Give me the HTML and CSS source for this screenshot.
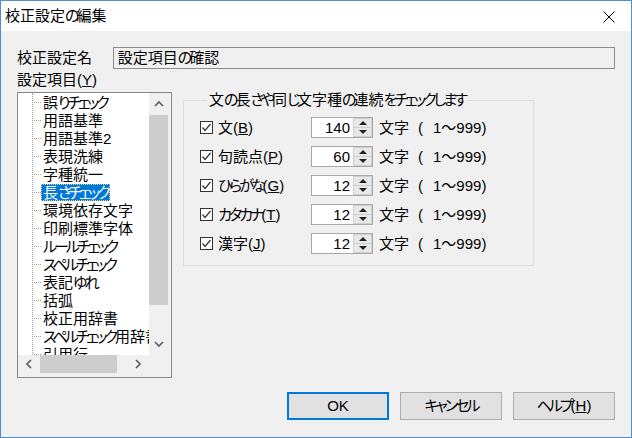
FILE: index.html
```html
<!DOCTYPE html>
<html lang="ja">
<head>
<meta charset="utf-8">
<title>校正設定の編集</title>
<link rel="stylesheet" href="styles.css">
</head>
<body>
<div class="window">
  <div class="titlebar">
    <span class="title">校正設定<span class="k">の</span>編集</span>
    <svg class="close" width="12" height="12" viewBox="0 0 12 12"><path d="M0.5 0.5 L11.5 11.5 M11.5 0.5 L0.5 11.5" stroke="#000" stroke-width="1" fill="none"/></svg>
  </div>
  <div class="client">
    <div class="name-row">
      <span class="name-label">校正設定名</span>
      <div class="name-box">設定項目<span class="k">の</span>確認</div>
    </div>
    <div class="items-label">設定項目(<u>Y</u>)</div>
    <div class="main">
      <div class="tree">
        <div class="tree-top">
          <div class="tree-items">
            <ul class="tree-list">
              <li><span class="lbl">誤<span class="k">りチェック</span></span></li>
              <li><span class="lbl">用語基準</span></li>
              <li><span class="lbl">用語基準2</span></li>
              <li><span class="lbl">表現洗練</span></li>
              <li><span class="lbl">字種統一</span></li>
              <li><span class="lbl sel">長<span class="k">さチェック</span></span></li>
              <li><span class="lbl">環境依存文字</span></li>
              <li><span class="lbl">印刷標準字体</span></li>
              <li><span class="lbl"><span class="k">ルールチェック</span></span></li>
              <li><span class="lbl"><span class="k">スペルチェック</span></span></li>
              <li><span class="lbl">表記<span class="k">ゆれ</span></span></li>
              <li><span class="lbl">括弧</span></li>
              <li><span class="lbl">校正用辞書</span></li>
              <li><span class="lbl"><span class="k">スペルチェック</span>用辞書</span></li>
              <li><span class="lbl">引用行</span></li>
            </ul>
          </div>
          <div class="vscroll">
            <div class="sbtn vbtn"><svg width="10" height="6" viewBox="0 0 10 6"><polyline points="1,5 5,1 9,5" fill="none" stroke="#606060" stroke-width="1.7"/></svg></div>
            <div class="vthumb"></div>
            <div class="vtrack"></div>
            <div class="sbtn vbtn"><svg width="10" height="6" viewBox="0 0 10 6"><polyline points="1,1 5,5 9,1" fill="none" stroke="#606060" stroke-width="1.7"/></svg></div>
          </div>
        </div>
        <div class="hscroll-row">
          <div class="hscroll">
            <div class="sbtn hbtn"><svg width="6" height="10" viewBox="0 0 6 10"><polyline points="5,1 1,5 5,9" fill="none" stroke="#606060" stroke-width="1.7"/></svg></div>
            <div class="hthumb"></div>
            <div class="htrack"></div>
            <div class="sbtn hbtn"><svg width="6" height="10" viewBox="0 0 6 10"><polyline points="1,1 5,5 1,9" fill="none" stroke="#606060" stroke-width="1.7"/></svg></div>
          </div>
          <div class="corner"></div>
        </div>
      </div>
      <fieldset class="group">
        <legend class="group-title">文<span class="k">の</span>長<span class="k">さや</span>同<span class="k">じ</span>文字種<span class="k">の</span>連続<span class="k">をチェックします</span></legend>
        <div class="rows">
          <div class="row">
            <div class="chk-label"><span class="chk"><svg width="11" height="11" viewBox="0 0 11 11"><polyline points="1.5,5.5 4,8.5 9.5,2" fill="none" stroke="#333" stroke-width="1.2"/></svg></span><span>文(<u>B</u>)</span></div>
            <div class="spin"><span class="num">140</span><span class="arrows"><span class="arr"><i class="up"></i></span><span class="arr"><i class="down"></i></span></span></div>
            <span class="unit">文字</span><span class="paren">(</span><span class="range">1～999)</span>
          </div>
          <div class="row">
            <div class="chk-label"><span class="chk"><svg width="11" height="11" viewBox="0 0 11 11"><polyline points="1.5,5.5 4,8.5 9.5,2" fill="none" stroke="#333" stroke-width="1.2"/></svg></span><span>句読点(<u>P</u>)</span></div>
            <div class="spin"><span class="num">60</span><span class="arrows"><span class="arr"><i class="up"></i></span><span class="arr"><i class="down"></i></span></span></div>
            <span class="unit">文字</span><span class="paren">(</span><span class="range">1～999)</span>
          </div>
          <div class="row">
            <div class="chk-label"><span class="chk"><svg width="11" height="11" viewBox="0 0 11 11"><polyline points="1.5,5.5 4,8.5 9.5,2" fill="none" stroke="#333" stroke-width="1.2"/></svg></span><span><span class="k">ひらがな</span>(<u>G</u>)</span></div>
            <div class="spin"><span class="num">12</span><span class="arrows"><span class="arr"><i class="up"></i></span><span class="arr"><i class="down"></i></span></span></div>
            <span class="unit">文字</span><span class="paren">(</span><span class="range">1～999)</span>
          </div>
          <div class="row">
            <div class="chk-label"><span class="chk"><svg width="11" height="11" viewBox="0 0 11 11"><polyline points="1.5,5.5 4,8.5 9.5,2" fill="none" stroke="#333" stroke-width="1.2"/></svg></span><span><span class="k">カタカナ</span>(<u>T</u>)</span></div>
            <div class="spin"><span class="num">12</span><span class="arrows"><span class="arr"><i class="up"></i></span><span class="arr"><i class="down"></i></span></span></div>
            <span class="unit">文字</span><span class="paren">(</span><span class="range">1～999)</span>
          </div>
          <div class="row">
            <div class="chk-label"><span class="chk"><svg width="11" height="11" viewBox="0 0 11 11"><polyline points="1.5,5.5 4,8.5 9.5,2" fill="none" stroke="#333" stroke-width="1.2"/></svg></span><span>漢字(<u>J</u>)</span></div>
            <div class="spin"><span class="num">12</span><span class="arrows"><span class="arr"><i class="up"></i></span><span class="arr"><i class="down"></i></span></span></div>
            <span class="unit">文字</span><span class="paren">(</span><span class="range">1～999)</span>
          </div>
        </div>
      </fieldset>
    </div>
    <div class="buttons">
      <button class="btn default">OK</button>
      <button class="btn"><span class="k">キャンセル</span></button>
      <button class="btn"><span class="k">ヘルプ</span>(<u>H</u>)</button>
    </div>
  </div>
</div>
</body>
</html>
```

FILE: styles.css
```css
* { box-sizing: border-box; }
html, body { margin: 0; padding: 0; background: #f0f0f0; }
body {
  font-family: "Liberation Sans", "Noto Sans CJK JP", sans-serif;
  font-size: 15px;
  line-height: 18px;
  color: #000;
  font-feature-settings: "palt";
}
u { text-decoration: underline; text-underline-offset: 1px; }
.k { letter-spacing: -3px; }

.window {
  width: 632px;
  height: 438px;
  border: 1px solid #4a90d9;
  display: flex;
  flex-direction: column;
  background: #f0f0f0;
}
.titlebar {
  height: 30px;
  background: #fff;
  display: flex;
  align-items: center;
  justify-content: space-between;
  padding-left: 4px;
  padding-right: 16px;
  flex: none;
}
.title { line-height: 30px; }
.close { display: block; margin-top: 1px; }

.client {
  flex: 1;
  padding: 16px 16px 0 16px;
  display: flex;
  flex-direction: column;
}
.name-row {
  display: flex;
  align-items: center;
  height: 22px;
}
.name-label { width: 96px; }
.name-box {
  width: 504px;
  height: 22px;
  border: 1px solid #8c8c8c;
  background: #f0f0f0;
  padding-left: 4px;
  line-height: 20px;
}
.items-label { margin-top: 2px; height: 18px; }

.main {
  margin-top: 3px;
  display: flex;
  align-items: flex-start;
  gap: 11px;
}

/* tree */
.tree {
  width: 155px;
  height: 286px;
  border: 1px solid #828790;
  background: #fff;
  display: flex;
  flex-direction: column;
}
.tree-top { display: flex; height: 262px; }
.tree-items { width: 131px; height: 262px; overflow: hidden; }
.tree-list {
  list-style: none;
  margin: 0 0 0 14px;
  padding: 0;
  border-left: 1px dotted #a0a0a0;
  height: 262px;
}
.tree-list li {
  height: 18px;
  line-height: 18px;
  white-space: nowrap;
  display: flex;
  align-items: center;
}
.tree-list li::before {
  content: "";
  width: 8px;
  height: 1px;
  flex: none;
  background-image: linear-gradient(to right, transparent 1px, #a0a0a0 1px);
  background-size: 2px 1px;
  background-repeat: repeat-x;
}
.tree-list li .lbl {
  padding: 0 2px;
  height: 17px;
  line-height: 17px;
}
.tree-list li .lbl.sel {
  background: #0078d7;
  color: #fff;
  outline: 1px dotted #f0d080;
  outline-offset: -1px;
}
.vscroll {
  width: 22px;
  height: 262px;
  background: #f0f0f0;
  display: flex;
  flex-direction: column;
}
.sbtn {
  display: flex;
  align-items: center;
  justify-content: center;
  background: #f0f0f0;
  flex: none;
}
.vbtn { height: 22px; width: 19px; }
.vthumb { height: 190px; width: 19px; background: #cdcdcd; flex: none; }
.vtrack { flex: 1; }
.hscroll-row { display: flex; height: 22px; }
.hscroll { width: 131px; display: flex; background: #f0f0f0; }
.hbtn { width: 22px; height: 18px; }
.hthumb { width: 77px; height: 18px; background: #cdcdcd; flex: none; }
.htrack { flex: 1; }
.corner { width: 22px; background: #f0f0f0; }

/* group */
.group {
  margin: -1px 0 0 0;
  width: 351px;
  border: 1px solid #dcdcdc;
  padding: 8px 0 11px 16px;
  min-width: 0;
}
.group-title {
  margin-left: 7px;
  padding: 0 2px;
  line-height: 18px;
}
.rows { display: flex; flex-direction: column; gap: 8px; }
.row { display: flex; align-items: center; height: 21px; }
.chk-label { width: 111px; display: flex; align-items: center; gap: 5px; }
.chk {
  width: 13px;
  height: 13px;
  border: 1px solid #333;
  background: #fff;
  display: flex;
  align-items: center;
  justify-content: center;
  flex: none;
}
.chk svg { display: block; }
.spin {
  width: 62px;
  height: 21px;
  display: flex;
  border: 1px solid #a8a8a8;
  background: #fff;
}
.num {
  flex: 1;
  text-align: right;
  padding-right: 3px;
  line-height: 19px;
}
.arrows {
  width: 19px;
  display: flex;
  flex-direction: column;
}
.arr {
  flex: 1;
  background: #e8e8e8;
  border: 1px solid #cfcfcf;
  display: flex;
  align-items: center;
  justify-content: center;
}
.arr + .arr { border-top: none; }
.up, .down { width: 0; height: 0; border-left: 4px solid transparent; border-right: 4px solid transparent; }
.up { border-bottom: 4px solid #222; }
.down { border-top: 4px solid #222; }
.unit { margin-left: 6px; }
.paren { margin-left: 9px; }
.range { margin-left: 10px; }

/* buttons */
.buttons {
  margin-top: 14px;
  display: flex;
  justify-content: flex-end;
  gap: 11px;
}
.btn {
  width: 102px;
  height: 28px;
  border: 1px solid #adadad;
  background: #e1e1e1;
  font-family: "Liberation Sans", "Noto Sans CJK JP", sans-serif;
  font-feature-settings: "palt";
  font-size: 15px;
  color: #000;
  padding: 0;
  line-height: 18px;
}
.btn.default { border: 2px solid #0078d7; }
```
